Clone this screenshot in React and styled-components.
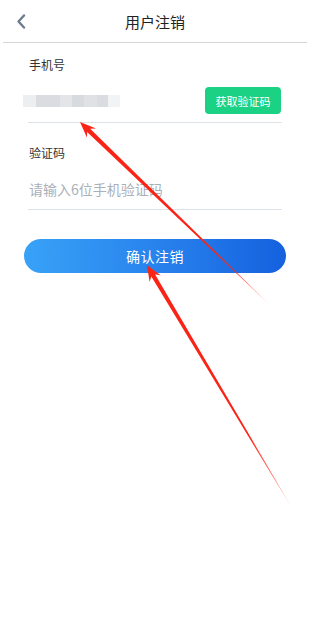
import React from "react";
import styled, { createGlobalStyle } from "styled-components";

const Global = createGlobalStyle`
  html, body { margin: 0; padding: 0; background: #fff; }
  body { font-family: "Noto Sans CJK SC", "Noto Sans", sans-serif; }
  * { box-sizing: border-box; }
`;

const Page = styled.div`
  position: relative;
  width: 311px;
  height: 642px;
  background: #fff;
  overflow: hidden;
`;

const Header = styled.header`
  position: relative;
  height: 43px;
  margin: 0 4px 0 3px;
  border-bottom: 1px solid #d4d4d6;
  display: flex;
  align-items: center;
  justify-content: center;
`;

const BackButton = styled.button`
  position: absolute;
  left: 11px;
  top: 13px;
  width: 14px;
  height: 16px;
  padding: 0;
  border: 0;
  background: none;
  display: flex;
  align-items: center;
  justify-content: center;
`;

const Title = styled.h1`
  margin: 0;
  font-size: 15px;
  font-weight: 400;
  color: #222;
  line-height: 1;
  padding-top: 1px;
`;

const Form = styled.div`
  padding: 0 29px 0 28px;
  display: flex;
  flex-direction: column;
`;

const Field = styled.div`
  display: flex;
  flex-direction: column;
  margin-top: ${(p) => p.$top}px;
`;

const Label = styled.div`
  font-size: 12px;
  color: #333;
  line-height: 16px;
  padding-left: 1px;
`;

const InputRow = styled.div`
  height: ${(p) => p.$h}px;
  margin-top: ${(p) => p.$mt}px;
  display: flex;
  align-items: center;
  justify-content: space-between;
  border-bottom: 1px solid #dde2e8;
`;

const Blurred = styled.div`
  display: flex;
  height: 12px;
  margin-left: -5px;
`;

const Pix = styled.span`
  display: block;
  width: ${(p) => p.$w}px;
  height: 12px;
  background: ${(p) => p.$c};
`;

const CodeButton = styled.button`
  width: 76px;
  height: 27px;
  border: 0;
  border-radius: 4px;
  background: #1ad184;
  color: #fff;
  font-family: inherit;
  font-size: 11px;
  padding: 0;
  margin-right: 1px;
  margin-bottom: 1px;
`;

const Placeholder = styled.div`
  font-size: 14px;
  color: #aab0b8;
  padding-left: 1px;
  padding-top: 2px;
`;

const Submit = styled.button`
  margin: 29px -4px 0 -4px;
  height: 34px;
  border: 0;
  border-radius: 17px;
  background: linear-gradient(90deg, #38a2f7 0%, #2a86ee 45%, #1561df 100%);
  color: #fff;
  font-family: inherit;
  font-size: 14px;
  letter-spacing: 0.5px;
  padding: 0;
`;

const Overlay = styled.svg`
  position: absolute;
  left: 0;
  top: 0;
  width: 311px;
  height: 642px;
  pointer-events: none;
`;

function Arrow({ x1, y1, x2, y2, id }) {
  const dx = x2 - x1;
  const dy = y2 - y1;
  const len = Math.hypot(dx, dy);
  const ux = dx / len;
  const uy = dy / len;
  const nx = -uy;
  const ny = ux;
  const headLen = 16;
  const headW = 6.5;
  const shaftW = 2.2;
  const bx = x2 - ux * headLen;
  const by = y2 - uy * headLen;
  const nbx = x2 - ux * (headLen - 4);
  const nby = y2 - uy * (headLen - 4);
  const pts = [
    [x1, y1],
    [nbx + nx * shaftW, nby + ny * shaftW],
    [bx + nx * headW, by + ny * headW],
    [x2, y2],
    [bx - nx * headW, by - ny * headW],
    [nbx - nx * shaftW, nby - ny * shaftW],
    [x1 - nx * 0.3, y1 - ny * 0.3],
  ]
    .map((p) => p.map((v) => v.toFixed(1)).join(","))
    .join(" ");
  return (
    <>
      <defs>
        <linearGradient id={id} gradientUnits="userSpaceOnUse" x1={x1} y1={y1} x2={x2} y2={y2}>
          <stop offset="0" stopColor="#ff2a1a" stopOpacity="0" />
          <stop offset="0.12" stopColor="#ff2a1a" stopOpacity="0.6" />
          <stop offset="0.3" stopColor="#fa2416" stopOpacity="1" />
          <stop offset="1" stopColor="#fa2416" stopOpacity="1" />
        </linearGradient>
      </defs>
      <polygon points={pts} fill={`url(#${id})`} />
    </>
  );
}

const pixels = [
  [13, "#eceef0"],
  [24, "#d9dce0"],
  [12, "#e3e5e8"],
  [12, "#d7dade"],
  [13, "#dfe1e4"],
  [11, "#d9dce0"],
  [12, "#f2f3f4"],
];

export default function App() {
  return (
    <>
      <Global />
      <Page>
        <Header>
          <BackButton aria-label="返回">
            <svg width="10" height="15" viewBox="0 0 10 15">
              <path d="M8 1.5 L2.5 7.5 L8 13.5" fill="none" stroke="#6d7b91" strokeWidth="2.4" strokeLinecap="round" strokeLinejoin="round" />
            </svg>
          </BackButton>
          <Title>用户注销</Title>
        </Header>
        <Form>
          <Field $top={14}>
            <Label>手机号</Label>
            <InputRow $h={43} $mt={7}>
              <Blurred>
                {pixels.map(([w, c], i) => (
                  <Pix key={i} $w={w} $c={c} />
                ))}
              </Blurred>
              <CodeButton>获取验证码</CodeButton>
            </InputRow>
          </Field>
          <Field $top={22}>
            <Label>验证码</Label>
            <InputRow $h={43} $mt={6}>
              <Placeholder>请输入6位手机验证码</Placeholder>
            </InputRow>
          </Field>
          <Submit>确认注销</Submit>
        </Form>
        <Overlay viewBox="0 0 311 642">
          <Arrow id="a1" x1={270} y1={305} x2={80} y2={122} />
          <Arrow id="a2" x1={291} y1={506} x2={147} y2={265} />
        </Overlay>
      </Page>
    </>
  );
}
